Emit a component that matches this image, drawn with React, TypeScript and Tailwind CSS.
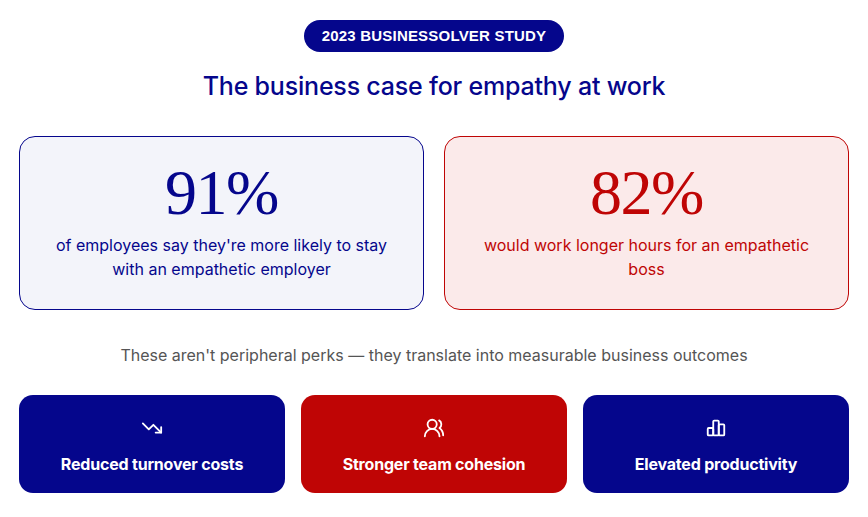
import React from "react";
import { TrendingDown, UsersRound } from "lucide-react";

const sans = "font-['Inter','Liberation_Sans',sans-serif]";
const serif = "font-['Liberation_Serif','DejaVu_Serif',serif]";

function BarsIcon({ className = "" }: { className?: string }) {
  return (
    <svg
      viewBox="0 0 24 24"
      fill="none"
      stroke="currentColor"
      strokeWidth={2}
      strokeLinecap="round"
      strokeLinejoin="round"
      className={className}
    >
      <path d="M3 13a1 1 0 0 1 1-1h4a1 1 0 0 1 1 1v6a1 1 0 0 1-1 1H4a1 1 0 0 1-1-1z" />
      <path d="M15 9a1 1 0 0 1 1-1h4a1 1 0 0 1 1 1v10a1 1 0 0 1-1 1h-4a1 1 0 0 1-1-1z" />
      <path d="M9 5a1 1 0 0 1 1-1h4a1 1 0 0 1 1 1v14a1 1 0 0 1-1 1h-4a1 1 0 0 1-1-1z" />
    </svg>
  );
}

const OUTCOMES = [
  { label: "Reduced turnover costs", bg: "bg-[#05068c]", Icon: TrendingDown },
  { label: "Stronger team cohesion", bg: "bg-[#bf0505]", Icon: UsersRound },
  { label: "Elevated productivity", bg: "bg-[#05068c]", Icon: BarsIcon },
];

export default function App() {
  return (
    <div className={`min-h-screen bg-white px-[19px] pt-5 ${sans}`}>
      {/* HEADER */}
      <div className="flex flex-col items-center">
        <span className="rounded-full bg-[#05068c] px-[18px] h-8 flex items-center text-[15px] font-bold text-white tracking-[0.2px] font-['Liberation_Sans',Arial,sans-serif]">
          2023 BUSINESSOLVER STUDY
        </span>
        <h1 className="mt-[18px] text-[25px] leading-8 font-medium text-[#05068c] tracking-[-0.2px]">
          The business case for empathy at work
        </h1>
      </div>

      {/* STATS */}
      <div className="mt-[34px] grid grid-cols-2 gap-5">
        <div className="h-[174px] rounded-2xl border border-[#05068c] bg-[#f3f4fa] flex flex-col items-center pt-[24px] text-[#05068c]">
          <div className={`${serif} text-[64px] leading-[64px] tracking-[-1.5px]`}>91%</div>
          <p className="mt-[8px] text-center text-[16px] leading-6 max-w-[360px]">
            of employees say they're more likely to stay with an empathetic employer
          </p>
        </div>
        <div className="h-[174px] rounded-2xl border border-[#bf0505] bg-[#fbeaea] flex flex-col items-center pt-[24px] text-[#bf0505]">
          <div className={`${serif} text-[64px] leading-[64px] tracking-[-1.5px]`}>82%</div>
          <p className="mt-[8px] text-center text-[16px] leading-6 max-w-[340px]">
            would work longer hours for an empathetic boss
          </p>
        </div>
      </div>

      <p className="mt-[33px] text-center text-[16px] text-[#555] leading-6">
        These aren't peripheral perks — they translate into measurable business outcomes
      </p>

      {/* OUTCOMES */}
      <div className="mt-[28px] grid grid-cols-3 gap-4">
        {OUTCOMES.map(({ label, bg, Icon }) => (
          <div
            key={label}
            className={`${bg} h-[98px] rounded-[14px] flex flex-col items-center pt-[22px] text-white`}
          >
            <Icon className="w-[22px] h-[22px]" strokeWidth={2} />
            <div className="mt-[13px] text-[16px] font-bold leading-6 tracking-[-0.2px]">{label}</div>
          </div>
        ))}
      </div>
    </div>
  );
}
